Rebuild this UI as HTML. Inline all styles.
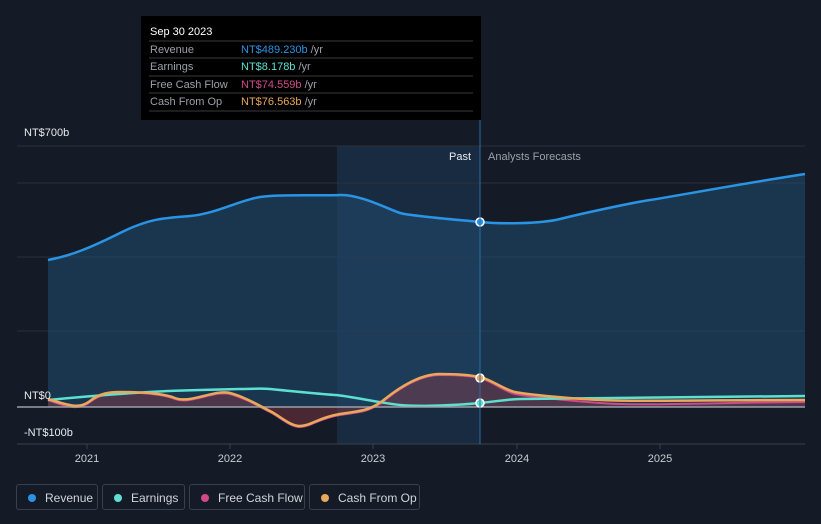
<!DOCTYPE html>
<html><head><style>
body{margin:0;background:#151b26;font-family:"Liberation Sans",sans-serif;}
.lg{position:absolute;top:484px;height:26px;border:1px solid #3a404b;border-radius:3px;color:#d0d3d8;font-size:12px;line-height:26px;box-sizing:border-box;padding-left:26px}
.lg i{position:absolute;left:11px;top:9px;width:8px;height:8px;border-radius:50%}
</style></head><body>
<div style="position:relative;width:821px;height:524px;overflow:hidden">
<svg width="821" height="524" style="position:absolute;left:0;top:0" font-family="Liberation Sans, sans-serif">
<rect x="17" y="146" width="788" height="298" fill="#151b26"/>
<rect x="337" y="146" width="143" height="298" fill="#1a2e44" opacity="0.9"/>
<line x1="17" y1="146" x2="805" y2="146" stroke="#2a303a"/>
<line x1="17" y1="183" x2="805" y2="183" stroke="#2a303a"/>
<line x1="17" y1="257" x2="805" y2="257" stroke="#2a303a"/>
<line x1="17" y1="331" x2="805" y2="331" stroke="#2a303a"/>
<line x1="17" y1="444" x2="805" y2="444" stroke="#3a404b"/>
<path d="M48,260 C70,256 90,248 120,233 S165,218 190,216 S240,200 260,197 S320,196 340,195 S390,210 400,213 S460,220 480,222 S540,224 560,219 S630,203 650,200 S740,184 805,174 L805,407 L48,407Z" fill="#1f4a70" opacity="0.55"/>
<path d="M48,260 C70,256 90,248 120,233 S165,218 190,216 S240,200 260,197 S320,196 340,195 S390,210 400,213 S460,220 480,222 S540,224 560,219 S630,203 650,200 S740,184 805,174" fill="none" stroke="#2a94e4" stroke-width="2.5"/>
<path d="M48,400 C70,408 80,410 90,402 S110,394 120,393 S160,393 175,399 S215,390 230,394 S260,407 270,412 S290,427 300,427 S320,418 340,415 S370,412 385,400 S420,375 440,375 S470,376 480,378 S505,392 515,394 S560,400 600,403 S700,403 805,402 L805,407 L48,407Z" fill="#8a3a48" opacity="0.45"/>
<path d="M48,400 C70,408 80,410 90,402 S110,394 120,393 S160,393 175,399 S215,390 230,394 S260,407 270,412 S290,427 300,427 S320,418 340,415 S370,412 385,400 S420,375 440,375 S470,376 480,378 S505,392 515,394 S560,400 600,403 S700,403 805,402" fill="none" stroke="#d04a8a" stroke-width="2"/>
<path d="M48,400 C100,395 150,391 200,390 S260,388 270,389 S320,394 335,395 S380,403 400,405 S460,405 480,403 S510,399 520,399 S700,397 805,396" fill="none" stroke="#5ee0d0" stroke-width="2.5"/>
<line x1="17" y1="407" x2="805" y2="407" stroke="#9aa0a8" stroke-width="1.5"/>
<path d="M48,399 C70,406 80,409 90,401 S110,392 120,392 S160,392 175,398 S215,389 230,393 S260,406 270,411 S290,426 300,426 S320,417 340,414 S370,411 385,399 S420,374 440,374 S470,375 480,377 S505,390 515,392 S560,398 600,400 S700,400 805,400" fill="none" stroke="#e9a85a" stroke-width="2.5"/>
<circle cx="480" cy="222" r="4" fill="#2a94e4" stroke="#fff" stroke-width="1.5"/>
<circle cx="480" cy="378" r="4" fill="#e9a85a" stroke="#fff" stroke-width="1.5"/>
<circle cx="480" cy="403" r="4" fill="#5ee0d0" stroke="#fff" stroke-width="1.5"/>
<line x1="480" y1="120" x2="480" y2="444" stroke="#2a6ea8" stroke-width="1"/>
<text x="471" y="160" fill="#e8eaed" font-size="11" text-anchor="end">Past</text>
<text x="488" y="160" fill="#9aa0a8" font-size="11">Analysts Forecasts</text>
<text x="24" y="136" fill="#e8eaed" font-size="11">NT$700b</text>
<text x="24" y="399" fill="#e8eaed" font-size="11">NT$0</text>
<text x="24" y="436" fill="#e8eaed" font-size="11">-NT$100b</text>
<g fill="#c8ccd2" font-size="11" text-anchor="middle">
<text x="87" y="462">2021</text><text x="230" y="462">2022</text><text x="373" y="462">2023</text><text x="517" y="462">2024</text><text x="660" y="462">2025</text></g>
<g stroke="#3a404b"><line x1="87" y1="444" x2="87" y2="449"/><line x1="230" y1="444" x2="230" y2="449"/><line x1="373" y1="444" x2="373" y2="449"/><line x1="517" y1="444" x2="517" y2="449"/><line x1="660" y1="444" x2="660" y2="449"/></g>
<rect x="141" y="16" width="340" height="104" fill="#000"/>
<text x="150" y="35" fill="#fff" font-size="11">Sep 30 2023</text>
<g stroke="#3a3a3a"><line x1="149" y1="41" x2="473" y2="41"/><line x1="149" y1="58" x2="473" y2="58"/><line x1="149" y1="76" x2="473" y2="76"/><line x1="149" y1="93" x2="473" y2="93"/><line x1="149" y1="111" x2="473" y2="111"/></g>
<g font-size="11">
<text x="150" y="53" fill="#9aa0a8">Revenue</text><text x="241" y="53" fill="#2a94e4">NT$489.230b <tspan fill="#9aa0a8">/yr</tspan></text>
<text x="150" y="70" fill="#9aa0a8">Earnings</text><text x="241" y="70" fill="#5ee0d0">NT$8.178b <tspan fill="#9aa0a8">/yr</tspan></text>
<text x="150" y="88" fill="#9aa0a8">Free Cash Flow</text><text x="241" y="88" fill="#d04a8a">NT$74.559b <tspan fill="#9aa0a8">/yr</tspan></text>
<text x="150" y="105" fill="#9aa0a8">Cash From Op</text><text x="241" y="105" fill="#e9a85a">NT$76.563b <tspan fill="#9aa0a8">/yr</tspan></text>
</g>
</svg>
<div class="lg" style="left:16px;width:82px;padding-left:28px"><i style="background:#2a94e4"></i>Revenue</div>
<div class="lg" style="left:102px;width:83px;padding-left:28px"><i style="background:#5ee0d0"></i>Earnings</div>
<div class="lg" style="left:189px;width:116px;padding-left:28px"><i style="background:#d04a8a"></i>Free Cash Flow</div>
<div class="lg" style="left:309px;width:111px;padding-left:28px"><i style="background:#e9a85a"></i>Cash From Op</div>
</div>
</body></html>
